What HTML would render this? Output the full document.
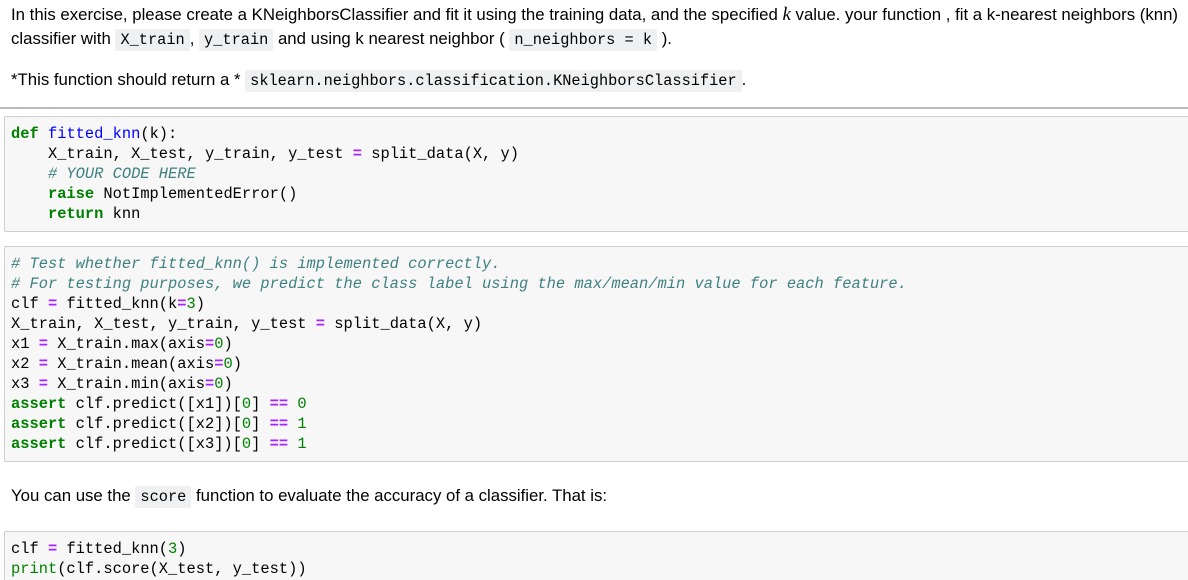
<!DOCTYPE html>
<html style="width:1188px;height:580px;overflow:hidden"><head><meta charset="utf-8"><style>
*{margin:0;padding:0;box-sizing:border-box}
body{width:1188px;height:580px;overflow:hidden;background:#fff;position:relative;font-family:"Liberation Sans",Arial,sans-serif;font-size:16.8px;color:#000}
.t{position:absolute;left:11px;white-space:nowrap;line-height:24px}
code{font-family:"Liberation Mono",monospace;font-size:15.3px;background:#eff0f1;padding:2px 5px;border-radius:2px}
.hr{position:absolute;left:0;top:107px;width:1188px;height:2px;background:#bbb}
.cell{position:absolute;left:4px;width:1190px;background:#f7f7f7;border:1px solid #cfcfcf;border-radius:2px}
pre{position:absolute;left:11px;font-family:"Liberation Mono",monospace;font-size:15.4px;line-height:20px;color:#000}
.k{color:#008000;font-weight:bold}
.f{color:#0000ff}
.c{color:#408080;font-style:italic}
.o{color:#aa22ff;font-weight:bold}
.n{color:#008000}
</style></head><body>
<div class="t" style="top:3px">In this exercise, please create a KNeighborsClassifier and fit it using the training data, and the specified <i style="font-family:'Liberation Serif',serif;font-size:19px">k</i> value. your function , fit a k-nearest neighbors (knn)</div>
<div class="t" style="top:27px">classifier with <code>X_train</code>, <code>y_train</code> and using k nearest neighbor ( <code>n_neighbors = k</code> ).</div>
<div class="t" style="top:68px">*This function should return a * <code>sklearn.neighbors.classification.KNeighborsClassifier</code>.</div>
<div class="hr"></div>
<div class="cell" style="top:116px;height:116px"></div>
<pre style="top:124px"><span class="k">def</span> <span class="f">fitted_knn</span>(k):
    X_train, X_test, y_train, y_test <span class="o">=</span> split_data(X, y)
    <span class="c"># YOUR CODE HERE</span>
    <span class="k">raise</span> NotImplementedError()
    <span class="k">return</span> knn</pre>
<div class="cell" style="top:246px;height:216px"></div>
<pre style="top:254px"><span class="c"># Test whether fitted_knn() is implemented correctly.</span>
<span class="c"># For testing purposes, we predict the class label using the max/mean/min value for each feature.</span>
clf <span class="o">=</span> fitted_knn(k<span class="o">=</span><span class="n">3</span>)
X_train, X_test, y_train, y_test <span class="o">=</span> split_data(X, y)
x1 <span class="o">=</span> X_train.max(axis<span class="o">=</span><span class="n">0</span>)
x2 <span class="o">=</span> X_train.mean(axis<span class="o">=</span><span class="n">0</span>)
x3 <span class="o">=</span> X_train.min(axis<span class="o">=</span><span class="n">0</span>)
<span class="k">assert</span> clf.predict([x1])[<span class="n">0</span>] <span class="o">==</span> <span class="n">0</span>
<span class="k">assert</span> clf.predict([x2])[<span class="n">0</span>] <span class="o">==</span> <span class="n">1</span>
<span class="k">assert</span> clf.predict([x3])[<span class="n">0</span>] <span class="o">==</span> <span class="n">1</span></pre>
<div class="t" style="top:484px">You can use the <code>score</code> function to evaluate the accuracy of a classifier. That is:</div>
<div class="cell" style="top:531px;height:60px"></div>
<pre style="top:539px">clf <span class="o">=</span> fitted_knn(<span class="n">3</span>)
<span class="n">print</span>(clf.score(X_test, y_test))</pre>
</body></html>
